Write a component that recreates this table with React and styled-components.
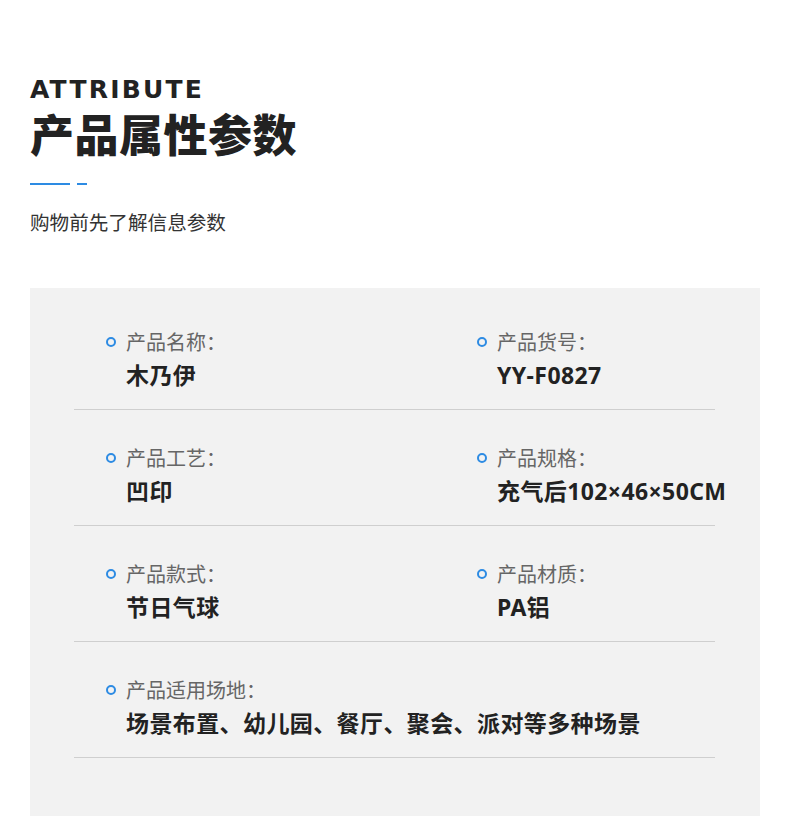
import React from "react"
import styled, { createGlobalStyle } from "styled-components"

const GlobalStyle = createGlobalStyle`
    body {
        margin: 0;
        background: #fff;
        font-family: "Noto Sans CJK SC", "Noto Sans", sans-serif;
    }
`

const attrs = [
    [
        { label: "产品名称：", value: "木乃伊" },
        { label: "产品货号：", value: "YY-F0827" },
    ],
    [
        { label: "产品工艺：", value: "凹印" },
        { label: "产品规格：", value: "充气后102×46×50CM" },
    ],
    [
        { label: "产品款式：", value: "节日气球" },
        { label: "产品材质：", value: "PA铝" },
    ],
    [{ label: "产品适用场地：", value: "场景布置、幼儿园、餐厅、聚会、派对等多种场景" }],
]

function App() {
    return (
        <Page>
            <GlobalStyle />
            <Header>
                <EnTitle>ATTRIBUTE</EnTitle>
                <Title>产品属性参数</Title>
                <Underline>
                    <Bar width={40} />
                    <Bar width={10} />
                </Underline>
                <Subtitle>购物前先了解信息参数</Subtitle>
            </Header>

            <Panel>
                {attrs.map((row, i) => (
                    <Row key={i}>
                        {row.map((item) => (
                            <Item key={item.label}>
                                <Dot />
                                <div>
                                    <Label>{item.label}</Label>
                                    <Value>{item.value}</Value>
                                </div>
                            </Item>
                        ))}
                    </Row>
                ))}
            </Panel>
        </Page>
    )
}

export default App

const Page = styled.div`
    width: 790px;
    height: 822px;
    padding: 0 30px;
    box-sizing: border-box;
    overflow: hidden;
`

const Header = styled.div`
    padding-top: 77px;
`

const EnTitle = styled.div`
    font-family: "DejaVu Sans", sans-serif;
    font-weight: 700;
    font-size: 25px;
    line-height: 25px;
    letter-spacing: 2.2px;
    color: #222;
`

const Title = styled.div`
    margin-top: 9px;
    font-size: 44px;
    line-height: 44px;
    font-weight: 900;
    letter-spacing: 0.5px;
    color: #222;
`

const Underline = styled.div`
    display: flex;
    gap: 7px;
    margin-top: 28px;
`

const Bar = styled.span`
    display: block;
    width: ${(props) => props.width}px;
    height: 2px;
    background: #2d8be3;
`

const Subtitle = styled.div`
    margin-top: 27px;
    font-size: 19.6px;
    line-height: 19px;
    color: #333;
`

const Panel = styled.div`
    margin-top: 57px;
    background: #f2f2f2;
    padding: 6px 45px 58px 44px;
`

const Row = styled.div`
    display: grid;
    grid-template-columns: 371px 1fr;
    padding: 36px 0 19px 32px;
    border-bottom: 1px solid #cfcfcf;
    height: 116px;
    box-sizing: border-box;
`

const Item = styled.div`
    display: flex;
    gap: 10px;
    white-space: nowrap;
`

const Dot = styled.span`
    flex: none;
    width: 10px;
    height: 10px;
    margin-top: 7px;
    border: 2px solid #2d8be3;
    border-radius: 50%;
    box-sizing: border-box;
`

const Label = styled.div`
    font-size: 20px;
    line-height: 24px;
    color: #666;
`

const Value = styled.div`
    margin-top: 8px;
    font-family: "Noto Sans", "Noto Sans CJK SC", sans-serif;
    font-size: 23px;
    line-height: 26px;
    font-weight: 700;
    letter-spacing: 0.4px;
    color: #222;
`
